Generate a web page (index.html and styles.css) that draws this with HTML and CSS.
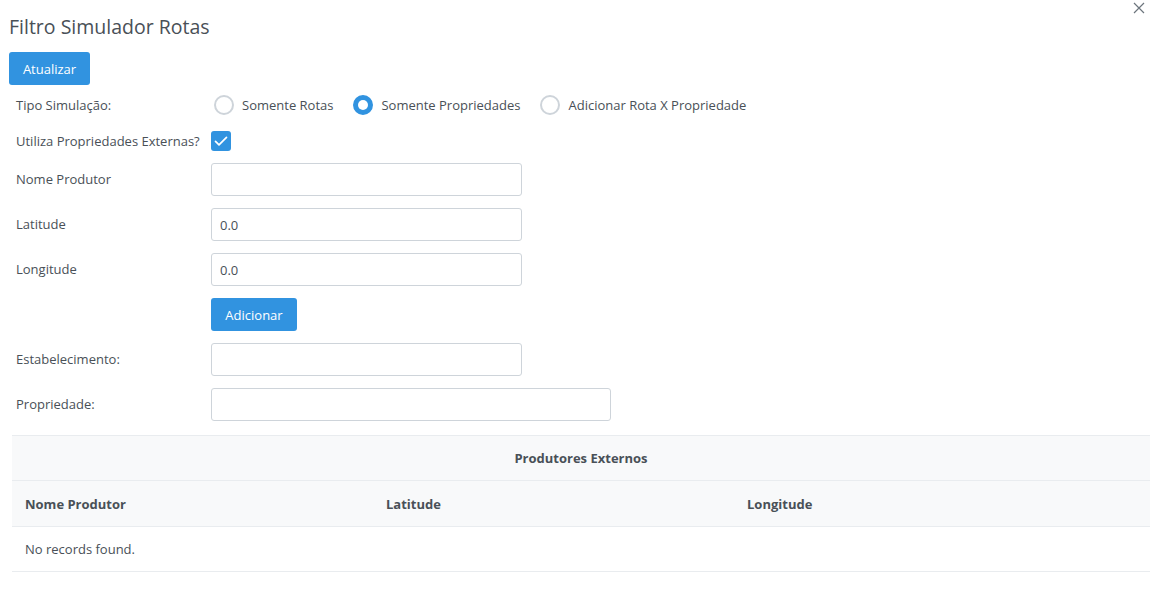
FILE: index.html
```html
<!DOCTYPE html>
<html lang="pt">
<head>
<meta charset="utf-8">
<title>Filtro Simulador Rotas</title>
<link rel="stylesheet" href="styles.css">
</head>
<body>
<div class="dialog">
  <div class="dialog-header">
    <h1 class="dialog-title">Filtro Simulador Rotas</h1>
    <button class="dialog-close" aria-label="Fechar">
      <svg width="12" height="12" viewBox="0 0 12 12"><path d="M1 1 L11 11 M11 1 L1 11" stroke="#6c757d" stroke-width="1.2" fill="none"/></svg>
    </button>
  </div>
  <div class="dialog-content">
    <button class="btn btn-refresh">Atualizar</button>

    <div class="form">
      <div class="row row-radio">
        <label class="label">Tipo Simulação:</label>
        <div class="field radios">
          <span class="radio-item"><span class="radio"></span><span>Somente Rotas</span></span>
          <span class="radio-item"><span class="radio checked"></span><span>Somente Propriedades</span></span>
          <span class="radio-item"><span class="radio"></span><span>Adicionar Rota X Propriedade</span></span>
        </div>
      </div>

      <div class="row row-check">
        <label class="label">Utiliza Propriedades Externas?</label>
        <div class="field">
          <span class="checkbox">
            <svg width="20" height="20" viewBox="0 0 20 20"><path d="M4.5 10.3 L8 13.8 L15.5 6.3" stroke="#fff" stroke-width="1.7" fill="none" stroke-linecap="round" stroke-linejoin="round"/></svg>
          </span>
        </div>
      </div>

      <div class="row row-input">
        <label class="label">Nome Produtor</label>
        <div class="field"><input class="input" type="text" value=""></div>
      </div>
      <div class="row row-input">
        <label class="label">Latitude</label>
        <div class="field"><input class="input" type="text" value="0.0"></div>
      </div>
      <div class="row row-input">
        <label class="label">Longitude</label>
        <div class="field"><input class="input" type="text" value="0.0"></div>
      </div>
      <div class="row row-input">
        <span class="label"></span>
        <div class="field"><button class="btn btn-add">Adicionar</button></div>
      </div>
      <div class="row row-input">
        <label class="label">Estabelecimento:</label>
        <div class="field"><input class="input" type="text" value=""></div>
      </div>
      <div class="row row-input">
        <label class="label">Propriedade:</label>
        <div class="field"><input class="input input-wide" type="text" value=""></div>
      </div>
    </div>

    <table class="table">
      <colgroup>
        <col class="col-1">
        <col class="col-2">
        <col class="col-3">
      </colgroup>
      <thead>
        <tr class="caption-row"><th colspan="3" class="caption">Produtores Externos</th></tr>
        <tr class="head-row">
          <th>Nome Produtor</th>
          <th>Latitude</th>
          <th>Longitude</th>
        </tr>
      </thead>
      <tbody>
        <tr><td colspan="3" class="empty">No records found.</td></tr>
      </tbody>
    </table>
  </div>
</div>
</body>
</html>
```

FILE: styles.css
```css
* { box-sizing: border-box; }

html, body {
  margin: 0;
  padding: 0;
  background: #ffffff;
}

body {
  font-family: "Open Sans", "Liberation Sans", sans-serif;
  font-size: 13px;
  color: #495057;
}

.dialog {
  width: 1163px;
  padding: 0 13px 0 9px;
}

.dialog-header {
  display: flex;
  justify-content: space-between;
  align-items: flex-start;
}

.dialog-title {
  margin: 15px 0 0 0;
  font-size: 19.5px;
  line-height: 24px;
  font-weight: 400;
  color: #495057;
}

.dialog-close {
  border: 0;
  background: transparent;
  padding: 0;
  margin: 1px 4px 0 0;
  width: 14px;
  height: 14px;
  display: flex;
  align-items: center;
  justify-content: center;
  cursor: pointer;
}

.dialog-content {
  padding-top: 13px;
}

.btn {
  border: 0;
  border-radius: 3px;
  background: #3193e0;
  color: #ffffff;
  font-family: "Open Sans", "Liberation Sans", sans-serif;
  font-size: 13px;
  height: 33px;
  padding: 0 12px;
  cursor: pointer;
}

.btn-refresh { display: block; width: 81px; padding: 0; }
.btn-add { width: 86px; padding: 0; }

.form {
  display: flex;
  flex-direction: column;
  padding-left: 7px;
  margin-top: 10px;
}

.row {
  display: flex;
  align-items: center;
}

.label {
  width: 195px;
  flex: none;
  line-height: 18px;
  padding-bottom: 1px;
}

.field {
  display: flex;
  align-items: center;
}

.row-radio { height: 20px; }
.row-check { height: 20px; margin-top: 16px; }
.row-input { height: 33px; margin-top: 12px; }

.radios { gap: 20px; padding-left: 3px; }

.radio-item {
  display: inline-flex;
  align-items: center;
  gap: 8px;
}

.radio {
  width: 20px;
  height: 20px;
  border-radius: 50%;
  border: 2px solid #ced4da;
  background: #fff;
  display: inline-flex;
  align-items: center;
  justify-content: center;
}

.radio.checked {
  border-color: #3193e0;
  background: #3193e0;
}

.radio.checked::after {
  content: "";
  width: 10px;
  height: 10px;
  border-radius: 50%;
  background: #fff;
}

.checkbox {
  width: 20px;
  height: 20px;
  border-radius: 3px;
  background: #3193e0;
  display: inline-flex;
  align-items: center;
  justify-content: center;
}

.input {
  width: 311px;
  height: 33px;
  border: 1px solid #ced4da;
  border-radius: 3px;
  padding: 0 8px;
  font-family: "Open Sans", "Liberation Sans", sans-serif;
  font-size: 13px;
  color: #495057;
  background: #fff;
  outline: none;
}

.input-wide { width: 400px; }

.table {
  margin: 14px 0 0 3px;
  width: 1138px;
  border-collapse: collapse;
  table-layout: fixed;
}

.col-1 { width: 361px; }
.col-2 { width: 361px; }
.col-3 { width: 416px; }

.table th {
  background: #f8f9fa;
  font-weight: 700;
  text-align: left;
  color: #495057;
  border-top: 1px solid #e9ecef;
  border-bottom: 1px solid #e9ecef;
  padding: 0 13px;
  height: 46px;
}

.table .caption {
  text-align: center;
  height: 45px;
}

.table td {
  height: 45px;
  padding: 0 13px;
  border-bottom: 1px solid #e9ecef;
}
```
